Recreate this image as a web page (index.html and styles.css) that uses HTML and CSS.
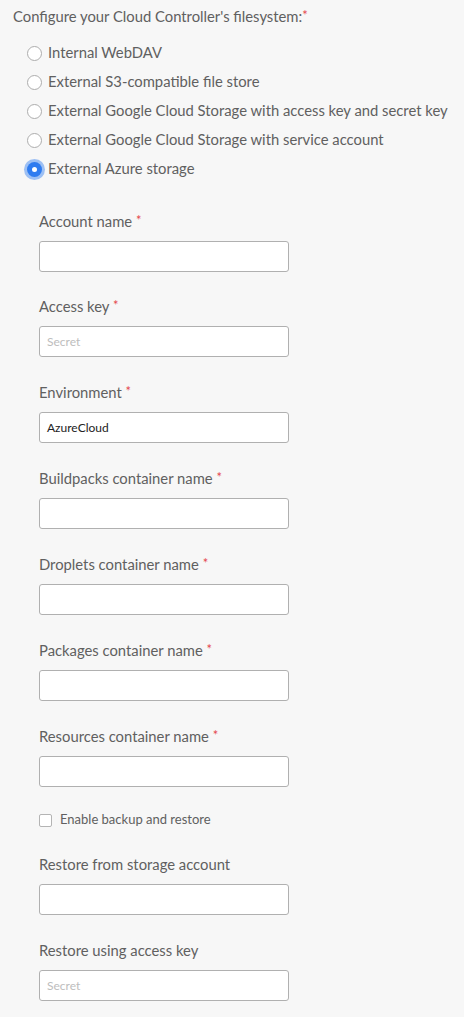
FILE: index.html
```html
<!DOCTYPE html>
<html>
<head>
<meta charset="utf-8">
<link rel="stylesheet" href="styles.css">
</head>
<body>
<div class="form">
  <div class="title">Configure your Cloud Controller's filesystem:<span class="req">*</span></div>
  <div class="radios">
    <label class="radio-row"><span class="radio"></span><span>Internal WebDAV</span></label>
    <label class="radio-row"><span class="radio"></span><span>External S3-compatible file store</span></label>
    <label class="radio-row"><span class="radio"></span><span>External Google Cloud Storage with access key and secret key</span></label>
    <label class="radio-row"><span class="radio"></span><span>External Google Cloud Storage with service account</span></label>
    <label class="radio-row"><span class="radio checked"></span><span>External Azure storage</span></label>
  </div>
  <div class="fields">
    <div class="field">
      <div class="label">Account name <span class="req">*</span></div>
      <div class="input"></div>
    </div>
    <div class="field">
      <div class="label">Access key <span class="req">*</span></div>
      <div class="input placeholder">Secret</div>
    </div>
    <div class="field">
      <div class="label">Environment <span class="req">*</span></div>
      <div class="input value">AzureCloud</div>
    </div>
    <div class="field">
      <div class="label">Buildpacks container name <span class="req">*</span></div>
      <div class="input"></div>
    </div>
    <div class="field">
      <div class="label">Droplets container name <span class="req">*</span></div>
      <div class="input"></div>
    </div>
    <div class="field">
      <div class="label">Packages container name <span class="req">*</span></div>
      <div class="input"></div>
    </div>
    <div class="field">
      <div class="label">Resources container name <span class="req">*</span></div>
      <div class="input"></div>
    </div>
    <label class="check-row"><span class="checkbox"></span><span>Enable backup and restore</span></label>
    <div class="field">
      <div class="label">Restore from storage account</div>
      <div class="input"></div>
    </div>
    <div class="field">
      <div class="label">Restore using access key</div>
      <div class="input placeholder">Secret</div>
    </div>
  </div>
</div>
</body>
</html>
```

FILE: styles.css
```css
html, body {
  margin: 0;
  padding: 0;
  background: #f7f7f7;
}
body {
  font-family: Lato, "Open Sans", sans-serif;
  color: #606060;
  font-size: 14.8px;
}
.form {
  padding: 6px 0 0 13px;
}
.title {
  line-height: 20px;
}
.req {
  color: #e5484d;
  font-size: 13px;
  vertical-align: top;
  line-height: 18px;
}
.radios {
  margin-top: 11.5px;
  padding-left: 14px;
  display: flex;
  flex-direction: column;
}
.radio-row {
  height: 29px;
  display: flex;
  align-items: center;
  gap: 7px;
  line-height: 20px;
}
.radio {
  width: 15px;
  height: 15px;
  box-sizing: border-box;
  border: 1px solid #adadad;
  border-radius: 50%;
  background: #fff;
  flex: none;
  margin-top: 2px;
  margin-left: -0.5px;
  margin-right: -0.5px;
}
.radio.checked {
  background: #2f7cf0;
  border: none;
  box-shadow: 0 0 0 3px rgba(47, 124, 240, 0.45);
  position: relative;
}
.radio.checked::after {
  content: "";
  position: absolute;
  width: 5px;
  height: 5px;
  border-radius: 50%;
  background: #fff;
  left: 5px;
  top: 5px;
}
.fields {
  padding-left: 26px;
  margin-top: 28px;
  display: flex;
  flex-direction: column;
  gap: 24.85px;
}
.field {
  display: flex;
  flex-direction: column;
  gap: 10px;
}
.label {
  line-height: 20px;
}
.input {
  width: 250px;
  height: 31px;
  box-sizing: border-box;
  border: 1px solid #b0b0b0;
  border-radius: 3px;
  background: #fff;
  font-size: 12px;
  line-height: 29px;
  padding-left: 7px;
}
.input.placeholder {
  color: #bdbdbd;
}
.input.value {
  color: #222;
}
.check-row {
  display: flex;
  align-items: center;
  gap: 8px;
  height: 20px;
  margin-top: -2px;
  font-size: 13px;
}
.checkbox {
  width: 13px;
  height: 13px;
  box-sizing: border-box;
  border: 1px solid #b4b4b4;
  border-radius: 2px;
  background: #fff;
  margin-top: 2px;
}
```
